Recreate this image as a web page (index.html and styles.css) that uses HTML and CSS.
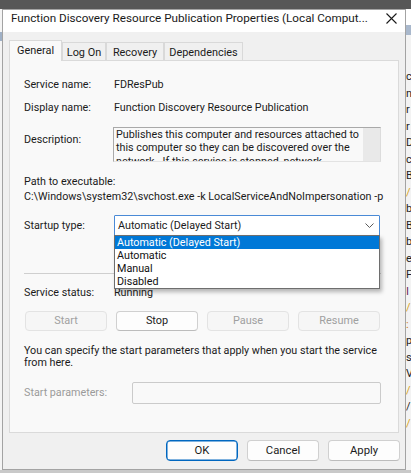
FILE: index.html
```html
<!DOCTYPE html>
<html>
<head>
<meta charset="utf-8">
<link rel="stylesheet" href="styles.css">
</head>
<body>
<div class="screen">
  <div class="desk-top"></div>
  <div class="desk-row">
    <div class="desk-left"><div class="band"></div></div>
    <div class="window">
      <div class="titlebar">
        <span class="title">Function Discovery Resource Publication Properties (Local Comput...</span>
        <svg class="close" width="11" height="11" viewBox="0 0 11 11"><path d="M0.5 0.5 L10.5 10.5 M10.5 0.5 L0.5 10.5" stroke="#1a1a1a" stroke-width="1.1" fill="none"/></svg>
      </div>
      <div class="client">
        <div class="tabs">
          <div class="tab active t-general">General</div>
          <div class="tab t-logon">Log On</div>
          <div class="tab t-recovery">Recovery</div>
          <div class="tab t-deps">Dependencies</div>
        </div>
        <div class="panel">
          <div class="row r-name"><span class="label">Service name:</span><span class="value">FDResPub</span></div>
          <div class="row r-display"><span class="label">Display name:</span><span class="value">Function Discovery Resource Publication</span></div>
          <div class="row r-desc">
            <span class="label label-desc">Description:</span>
            <div class="descbox">
              <p class="desctext">Publishes this computer and resources attached to<br>this computer so they can be discovered over the<br>network.&nbsp; If this service is stopped, network<br>resources will no longer be published and they will</p>
              <div class="scroll"></div>
            </div>
          </div>
          <div class="path-label">Path to executable:</div>
          <div class="path-value">C:\Windows\system32\svchost.exe -k LocalServiceAndNoImpersonation -p</div>
          <div class="row r-startup">
            <span class="label label-startup">Startup type:</span>
            <div class="combo">
              <span class="combo-text">Automatic (Delayed Start)</span>
              <svg class="chev" width="9" height="5" viewBox="0 0 9 5"><path d="M0.5 0.5 L4.5 4.5 L8.5 0.5" stroke="#5a5a5a" stroke-width="1" fill="none"/></svg>
              <ul class="dropdown">
                <li class="sel">Automatic (Delayed Start)</li>
                <li>Automatic</li>
                <li>Manual</li>
                <li>Disabled</li>
              </ul>
            </div>
          </div>
          <div class="sep"></div>
          <div class="row r-status"><span class="label">Service status:</span><span class="value">Running</span></div>
          <div class="svc-buttons">
            <button class="btn disabled b-start">Start</button>
            <button class="btn b-stop">Stop</button>
            <button class="btn disabled b-pause">Pause</button>
            <button class="btn disabled b-resume">Resume</button>
          </div>
          <p class="hint">You can specify the start parameters that apply when you start the service<br>from here.</p>
          <div class="row r-params">
            <span class="label label-params">Start parameters:</span>
            <div class="params-input"></div>
          </div>
        </div>
        <div class="footer">
          <button class="btn fbtn ok">OK</button>
          <button class="btn fbtn">Cancel</button>
          <button class="btn fbtn">Apply</button>
        </div>
      </div>
    </div>
    <div class="desk-right">
      <div class="desk-right-band"></div>
      <span class="dk">c</span><span class="dk">n</span><span class="dk">r</span><span class="dk">r</span><span class="dk">D</span><span class="dk">c</span><span class="dk">B</span><span class="yl">/</span><span class="dk">b</span><span class="dk">B</span><span class="dk">b</span><span class="dk">e</span><span class="dk">F</span><span class="pu">I</span><span class="yl">/</span><span class="or">:</span><span class="dk">p</span><span class="dk">s</span><span class="dk">V</span><span class="yl">/</span><span class="dk">/</span><span class="yl">/</span>
    </div>
  </div>
  <div class="desk-bottom"></div>
</div>
</body>
</html>
```
FILE: styles.css
```css
* { box-sizing: border-box; }
html, body { margin: 0; padding: 0; }
body {
  font-family: Roboto, "Liberation Sans", sans-serif;
  font-size: 10.75px;
  color: #1b1b1b;
  background: #f2f2f2;
}
.screen { width: 411px; height: 473px; overflow: hidden; display: flex; flex-direction: column; }
.desk-top { height: 9px; background: #575757; flex: none; }
.desk-row { height: 461px; display: flex; flex: none; }
.desk-left { width: 2px; background: #f4f4f4; flex: none; padding-top: 23px; }
.desk-left .band { height: 9px; background: #9fb0c6; }
.desk-right {
  width: 5px; flex: none; background: #f3f3f3;
  display: flex; flex-direction: column;
  overflow: hidden; font-size: 11px; line-height: 16.5px;
  border-top: 16px solid #ffffff;
}
.desk-right-band { height: 10px; background: #a9b8cc; margin-bottom: 34px; flex: none; }
.desk-right span { display: block; }
.dk { color: #222; }
.yl { color: #d8a420; }
.pu { color: #6a2a5a; }
.or { color: #d07a20; }
.desk-bottom { height: 3px; background: #c9c9c9; flex: none; }

.window {
  width: 404px; height: 461px; flex: none;
  border: 1px solid #a3a3a3;
  background: #f0f0f0;
  display: flex; flex-direction: column;
}
.titlebar {
  height: 22px; background: #ffffff; flex: none;
  display: flex; justify-content: space-between; align-items: flex-start;
  padding: 0 8px 0 8px;
}
.title { font-size: 11.7px; line-height: 16px; color: #1a1a1a; white-space: nowrap; }
.close { margin-top: 3px; }

.client { padding: 8px 6px 0 6px; flex: 1; display: flex; flex-direction: column; }
.tabs { display: flex; align-items: flex-end; height: 21px; flex: none; }
.tab {
  height: 18px; margin-bottom: 1px;
  border: 1px solid #d9d9d9; border-bottom: none;
  background: #f0f0f0; text-align: center;
  line-height: 15px; padding-top: 2px; font-size: 10.9px;
}
.tab.active {
  height: 21px; margin-bottom: 0; background: #f9f9f9;
  position: relative; z-index: 1; text-align: left; padding-left: 7px; padding-top: 2px;
}
.t-general { width: 53px; }
.t-logon { width: 44px; }
.t-recovery { width: 58px; }
.t-deps { width: 79px; }

.panel {
  margin-top: -1px; height: 373px; flex: none;
  border: 1px solid #dadada; background: #f9f9f9;
  padding: 16px 16px 0 14px;
}
.row { display: flex; align-items: flex-start; line-height: 15px; }
.label { width: 90px; flex: none; white-space: nowrap; }
.value { white-space: nowrap; }
.r-display { margin-top: 8px; }
.r-desc { margin-top: 12px; }
.label-desc { padding-top: 5px; }
.descbox {
  width: 268px; height: 35px; margin-left: -1px;
  border: 1px solid #a9a9a9; border-right-color: #dcdcdc; border-bottom-color: #e3e3e3;
  background: #f9f9f9; display: flex; overflow: hidden;
}
.desctext { margin: 0; padding: 0 0 0 2px; flex: 1; line-height: 13.3px; white-space: nowrap; overflow: hidden; }
.scroll { width: 17px; flex: none; background: #e9e9e9; }
.path-label { margin-top: 12px; line-height: 15px; }
.path-value { line-height: 15px; white-space: nowrap; }
.r-startup { margin-top: 11px; }
.label-startup { line-height: 21px; }
.combo {
  width: 266px; height: 21px; position: relative;
  border: 1px solid #4a8ad6; border-radius: 1px; background: #ffffff;
  display: flex; align-items: center; justify-content: space-between;
  padding: 0 5px 0 3px; line-height: 19px;
}
.dropdown {
  position: absolute; top: 100%; left: -1px; width: 266px;
  margin: 0; padding: 0; list-style: none;
  background: #ffffff; border: 1px solid #6e6e6e;
  box-shadow: 2px 3px 4px rgba(0,0,0,0.28);
  z-index: 5;
}
.dropdown li { height: 13px; line-height: 13px; padding-left: 2px; color: #111; }
.dropdown li.sel { background: #0078d7; color: #ffffff; }
.sep { margin-top: 37px; height: 1px; width: 357px; background: #cfcfcf; }
.r-status { margin-top: 11px; }

.btn {
  font-family: Roboto, "Liberation Sans", sans-serif; font-size: 10.9px; color: #1b1b1b;
  background: #fdfdfd; border: 1px solid #d0d0d0; border-bottom-color: #bcbcbc;
  border-radius: 4px; padding: 0; height: 20px; line-height: 18px;
}
.btn.disabled { background: #f6f6f6; border-color: #e3e3e3; color: #a0a0a0; }
.svc-buttons { margin-top: 11px; display: flex; gap: 9px; padding-left: 1px; }
.svc-buttons .btn { width: 82px; }
.hint { margin: 14px 0 0 0; line-height: 12px; white-space: nowrap; }
.r-params { margin-top: 13px; }
.label-params { width: 108px; line-height: 21px; color: #9b9b9b; }
.params-input { width: 249px; height: 22px; border: 1px solid #cbcbcb; border-radius: 2px; background: #f9f9f9; }

.footer { display: flex; justify-content: flex-end; gap: 9px; margin-top: 7px; margin-right: -1px; }
.fbtn { width: 72px; height: 21px; line-height: 19px; font-size: 11.3px; }
.ok { border: 1px solid #0067c0; box-shadow: inset 0 0 0 0.5px #0067c0; }
```
